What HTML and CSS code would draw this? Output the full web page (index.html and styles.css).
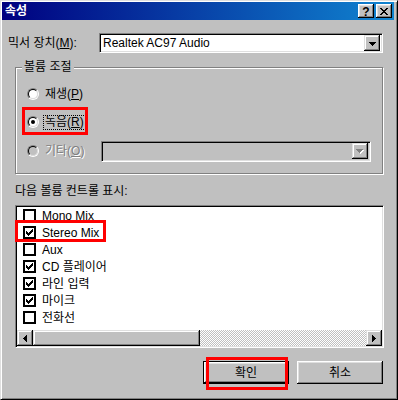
FILE: index.html
```html
<!DOCTYPE html>
<html lang="ko">

<head>
    <meta charset="UTF-8">
    <meta name="viewport" content="width=device-width, initial-scale=1.0">
    <title>속성</title>
    <link rel="stylesheet" href="styles.css">
</head>

<body>
    <div class="window">
        <div class="title-bar">
            <span class="title-text">속성</span>
            <div class="title-buttons">
                <span class="title-btn help">?</span>
                <span class="title-btn close">
                    <svg width="8" height="7" shape-rendering="crispEdges">
                        <path d="M0 0h2v1H0zM6 0h2v1H6zM1 1h2v1H1zM5 1h2v1H5zM2 2h4v1H2zM3 3h2v1H3zM2 4h4v1H2zM1 5h2v1H1zM5 5h2v1H5zM0 6h2v1H0zM6 6h2v1H6z" fill="#000"/>
                    </svg>
                </span>
            </div>
        </div>

        <div class="content">
            <!-- mixer device -->
            <div class="mixer-row">
                <span class="mixer-label">믹서 장치(<u>M</u>):</span>
                <div class="combo mixer-combo">
                    <span class="combo-text">Realtek AC97 Audio</span>
                    <span class="drop-btn">
                        <svg width="7" height="4" shape-rendering="crispEdges">
                            <path d="M0 0h7v1H0zM1 1h5v1H1zM2 2h3v1H2zM3 3h1v1H3z" fill="#000"/>
                        </svg>
                    </span>
                </div>
            </div>

            <!-- volume group -->
            <fieldset class="group">
                <legend>볼륨 조절</legend>
                <div class="radio-row">
                    <span class="radio"></span>
                    <span class="radio-label">재생(<u>P</u>)</span>
                </div>
                <div class="radio-row">
                    <span class="marked marked-radio">
                        <span class="radio checked"></span>
                        <span class="radio-label focus">녹음(<u>R</u>)</span>
                    </span>
                </div>
                <div class="radio-row disabled">
                    <span class="radio"></span>
                    <span class="radio-label">기타(<u>O</u>)</span>
                    <div class="combo other-combo">
                        <span class="drop-btn">
                            <svg width="8" height="5" shape-rendering="crispEdges">
                                <path d="M1 1h7v1H1zM2 2h5v1H2zM3 3h3v1H3zM4 4h1v1H4z" fill="#fff"/>
                                <path d="M0 0h7v1H0zM1 1h5v1H1zM2 2h3v1H2zM3 3h1v1H3z" fill="#808080"/>
                            </svg>
                        </span>
                    </div>
                </div>
            </fieldset>

            <div class="list-label">다음 볼륨 컨트롤 표시:</div>

            <!-- controls list -->
            <div class="listbox">
                <ul class="items">
                    <li><span class="check"></span><span class="item-text">Mono Mix</span></li>
                    <li>
                        <span class="marked marked-item">
                            <span class="check on"><svg width="7" height="7" shape-rendering="crispEdges"><path d="M6 0h1v1H6zM5 1h2v1H5zM0 2h1v1H0zM4 2h3v1H4zM0 3h2v1H0zM3 3h3v1H3zM0 4h5v1H0zM1 5h3v1H1zM2 6h1v1H2z" fill="#000"/></svg></span>
                            <span class="item-text">Stereo Mix</span>
                        </span>
                    </li>
                    <li><span class="check"></span><span class="item-text">Aux</span></li>
                    <li><span class="check on"><svg width="7" height="7" shape-rendering="crispEdges"><path d="M6 0h1v1H6zM5 1h2v1H5zM0 2h1v1H0zM4 2h3v1H4zM0 3h2v1H0zM3 3h3v1H3zM0 4h5v1H0zM1 5h3v1H1zM2 6h1v1H2z" fill="#000"/></svg></span><span class="item-text">CD 플레이어</span></li>
                    <li><span class="check on"><svg width="7" height="7" shape-rendering="crispEdges"><path d="M6 0h1v1H6zM5 1h2v1H5zM0 2h1v1H0zM4 2h3v1H4zM0 3h2v1H0zM3 3h3v1H3zM0 4h5v1H0zM1 5h3v1H1zM2 6h1v1H2z" fill="#000"/></svg></span><span class="item-text">라인 입력</span></li>
                    <li><span class="check on"><svg width="7" height="7" shape-rendering="crispEdges"><path d="M6 0h1v1H6zM5 1h2v1H5zM0 2h1v1H0zM4 2h3v1H4zM0 3h2v1H0zM3 3h3v1H3zM0 4h5v1H0zM1 5h3v1H1zM2 6h1v1H2z" fill="#000"/></svg></span><span class="item-text">마이크</span></li>
                    <li><span class="check"></span><span class="item-text">전화선</span></li>
                </ul>
                <div class="hscroll">
                    <span class="scroll-btn">
                        <svg width="4" height="7" shape-rendering="crispEdges"><path d="M0 3h1v1H0zM1 2h1v3H1zM2 1h1v5H2zM3 0h1v7H3z" fill="#000"/></svg>
                    </span>
                    <span class="scroll-thumb"></span>
                    <span class="scroll-track"></span>
                    <span class="scroll-btn">
                        <svg width="4" height="7" shape-rendering="crispEdges"><path d="M3 3h1v1H3zM2 2h1v3H2zM1 1h1v5H1zM0 0h1v7H0z" fill="#000"/></svg>
                    </span>
                </div>
            </div>

            <div class="buttons">
                <span class="btn default marked marked-btn">확인</span>
                <span class="btn">취소</span>
            </div>
        </div>
    </div>
</body>

</html>
```

FILE: styles.css
```css
* {
    box-sizing: border-box;
}

body {
    margin: 0;
    background-color: #c0c0c0;
    font-family: "Liberation Sans", "Noto Sans CJK KR", sans-serif;
    font-size: 12px;
    color: #000;
}

u {
    text-decoration-thickness: 1px;
    text-underline-offset: 1px;
}

.window {
    width: 398px;
    height: 400px;
    padding: 1px;
    background-color: #c0c0c0;
    border: 1px solid;
    border-color: #dfdfdf #000 #000 #dfdfdf;
    box-shadow: inset 1px 1px 0 #fff, inset -1px -1px 0 #808080;
}

/* title bar */
.title-bar {
    height: 18px;
    margin-right: 2px;
    padding: 0 2px 0 3px;
    display: flex;
    align-items: center;
    background: linear-gradient(to right, #000080, #1084d0);
}

.title-text {
    color: #fff;
    font-weight: bold;
    line-height: 14px;
}

.title-buttons {
    margin-left: auto;
    display: flex;
    gap: 2px;
}

.title-btn {
    width: 16px;
    height: 14px;
    display: flex;
    align-items: center;
    justify-content: center;
    background-color: #c0c0c0;
    box-shadow: inset -1px -1px 0 #000, inset 1px 1px 0 #fff, inset -2px -2px 0 #808080, inset 2px 2px 0 #dfdfdf;
}

.title-btn.help {
    font-weight: bold;
    font-size: 12px;
    line-height: 12px;
    padding-top: 1px;
}

.title-btn.close svg {
    margin-top: 1px;
}

/* content */
.content {
    padding: 13px 12px 0 13px;
}

.mixer-row {
    height: 20px;
    display: flex;
    align-items: center;
}

.mixer-label {
    margin-left: -7px;
    line-height: 14px;
}

.combo {
    height: 20px;
    padding: 2px;
    display: flex;
    align-items: center;
    background-color: #fff;
    border: 1px solid;
    border-color: #808080 #fff #fff #808080;
    box-shadow: inset 1px 1px 0 #000, inset -1px -1px 0 #dfdfdf;
}

.mixer-combo {
    width: 284px;
    margin-left: auto;
    margin-right: 1px;
}

.combo-text {
    padding-left: 1px;
    line-height: 14px;
}

.drop-btn {
    width: 16px;
    height: 16px;
    margin-left: auto;
    display: flex;
    align-items: center;
    justify-content: center;
    background-color: #c0c0c0;
    box-shadow: inset -1px -1px 0 #000, inset 1px 1px 0 #dfdfdf, inset -2px -2px 0 #808080, inset 2px 2px 0 #fff;
}

.drop-btn svg {
    margin-top: 1px;
}

/* volume group */
.group {
    margin: 7px 1px 0 0;
    padding: 10px 11px 11px 11px;
    min-width: 0;
    border: 1px solid #808080;
    box-shadow: 1px 1px 0 #fff, inset 1px 1px 0 #fff;
}

.group legend {
    margin-left: -5px;
    padding: 0 2px;
    line-height: 14px;
    background-color: #c0c0c0;
}

.radio-row {
    height: 20px;
    display: flex;
    align-items: center;
}

.radio-row + .radio-row {
    margin-top: 8px;
}

.radio-row.disabled {
    height: 22px;
}

.radio {
    position: relative;
    width: 12px;
    height: 12px;
    flex: none;
    border-radius: 50%;
    border: 1px solid;
    border-color: #808080 #fff #fff #808080;
}

.radio::before {
    content: "";
    position: absolute;
    inset: 0;
    border-radius: 50%;
    border: 1px solid;
    border-color: #000 #dfdfdf #dfdfdf #000;
    background-color: #fff;
}

.disabled .radio::before {
    background-color: #c0c0c0;
}

.radio.checked::after {
    content: "";
    position: absolute;
    left: 3px;
    top: 3px;
    width: 4px;
    height: 4px;
    border-radius: 50%;
    background-color: #000;
}

.radio-label {
    margin-left: 4px;
    padding: 0 1px;
    line-height: 13px;
    border: 1px solid transparent;
}

.radio-label.focus {
    border: 1px dotted #000;
}

.disabled .radio-label {
    color: #808080;
    text-shadow: 1px 1px 0 #fff;
}

.other-combo {
    width: 270px;
    height: 21px;
    margin-left: auto;
    background-color: #c0c0c0;
}

.marked {
    position: relative;
}

.marked::after {
    content: "";
    position: absolute;
    border: 3px solid #ff0000;
    pointer-events: none;
}

.marked-radio {
    display: inline-flex;
    align-items: center;
    height: 20px;
}

.marked-radio::after {
    top: -5px;
    bottom: -3px;
    left: -5px;
    right: -2px;
}

/* list */
.list-label {
    margin-top: 10px;
    line-height: 14px;
}

.listbox {
    height: 143px;
    margin-top: 7px;
    padding: 1px;
    display: flex;
    flex-direction: column;
    background-color: #fff;
    border: 1px solid;
    border-color: #808080 #fff #fff #808080;
    box-shadow: inset 1px 1px 0 #000, inset -1px -1px 0 #dfdfdf;
}

.items {
    list-style: none;
    margin: 0;
    padding: 0;
}

.items li {
    height: 17px;
    padding-left: 6px;
    display: flex;
    align-items: center;
}

.check {
    width: 13px;
    height: 13px;
    flex: none;
    display: flex;
    align-items: center;
    justify-content: center;
    border: 2px solid #000;
    background-color: #fff;
}

.item-text {
    margin-left: 6px;
    line-height: 14px;
    white-space: nowrap;
}

.marked-item {
    display: inline-flex;
    align-items: center;
    height: 17px;
}

.marked-item::after {
    top: -4px;
    bottom: -1px;
    left: -8px;
    right: -7px;
}

.hscroll {
    height: 16px;
    margin-top: auto;
    display: flex;
}

.scroll-btn {
    width: 16px;
    height: 16px;
    flex: none;
    display: flex;
    align-items: center;
    justify-content: center;
    background-color: #c0c0c0;
    box-shadow: inset -1px -1px 0 #000, inset 1px 1px 0 #dfdfdf, inset -2px -2px 0 #808080, inset 2px 2px 0 #fff;
}

.scroll-thumb {
    width: 167px;
    flex: none;
    background-color: #c0c0c0;
    box-shadow: inset -1px -1px 0 #000, inset 1px 1px 0 #dfdfdf, inset -2px -2px 0 #808080, inset 2px 2px 0 #fff;
}

.scroll-track {
    flex: 1;
    background: repeating-conic-gradient(#c0c0c0 0 25%, #fff 0 50%) 0 0 / 2px 2px;
}

/* dialog buttons */
.buttons {
    margin-top: 13px;
    margin-right: 1px;
    display: flex;
    justify-content: flex-end;
    gap: 8px;
}

.btn {
    width: 86px;
    height: 23px;
    display: flex;
    align-items: center;
    justify-content: center;
    line-height: 14px;
    background-color: #c0c0c0;
    box-shadow: inset -1px -1px 0 #000, inset 1px 1px 0 #fff, inset -2px -2px 0 #808080, inset 2px 2px 0 #dfdfdf;
}

.btn.default {
    border: 1px solid #000;
}

.marked-btn::after {
    top: -5px;
    bottom: -7px;
    left: 2px;
    right: 0;
}
```
